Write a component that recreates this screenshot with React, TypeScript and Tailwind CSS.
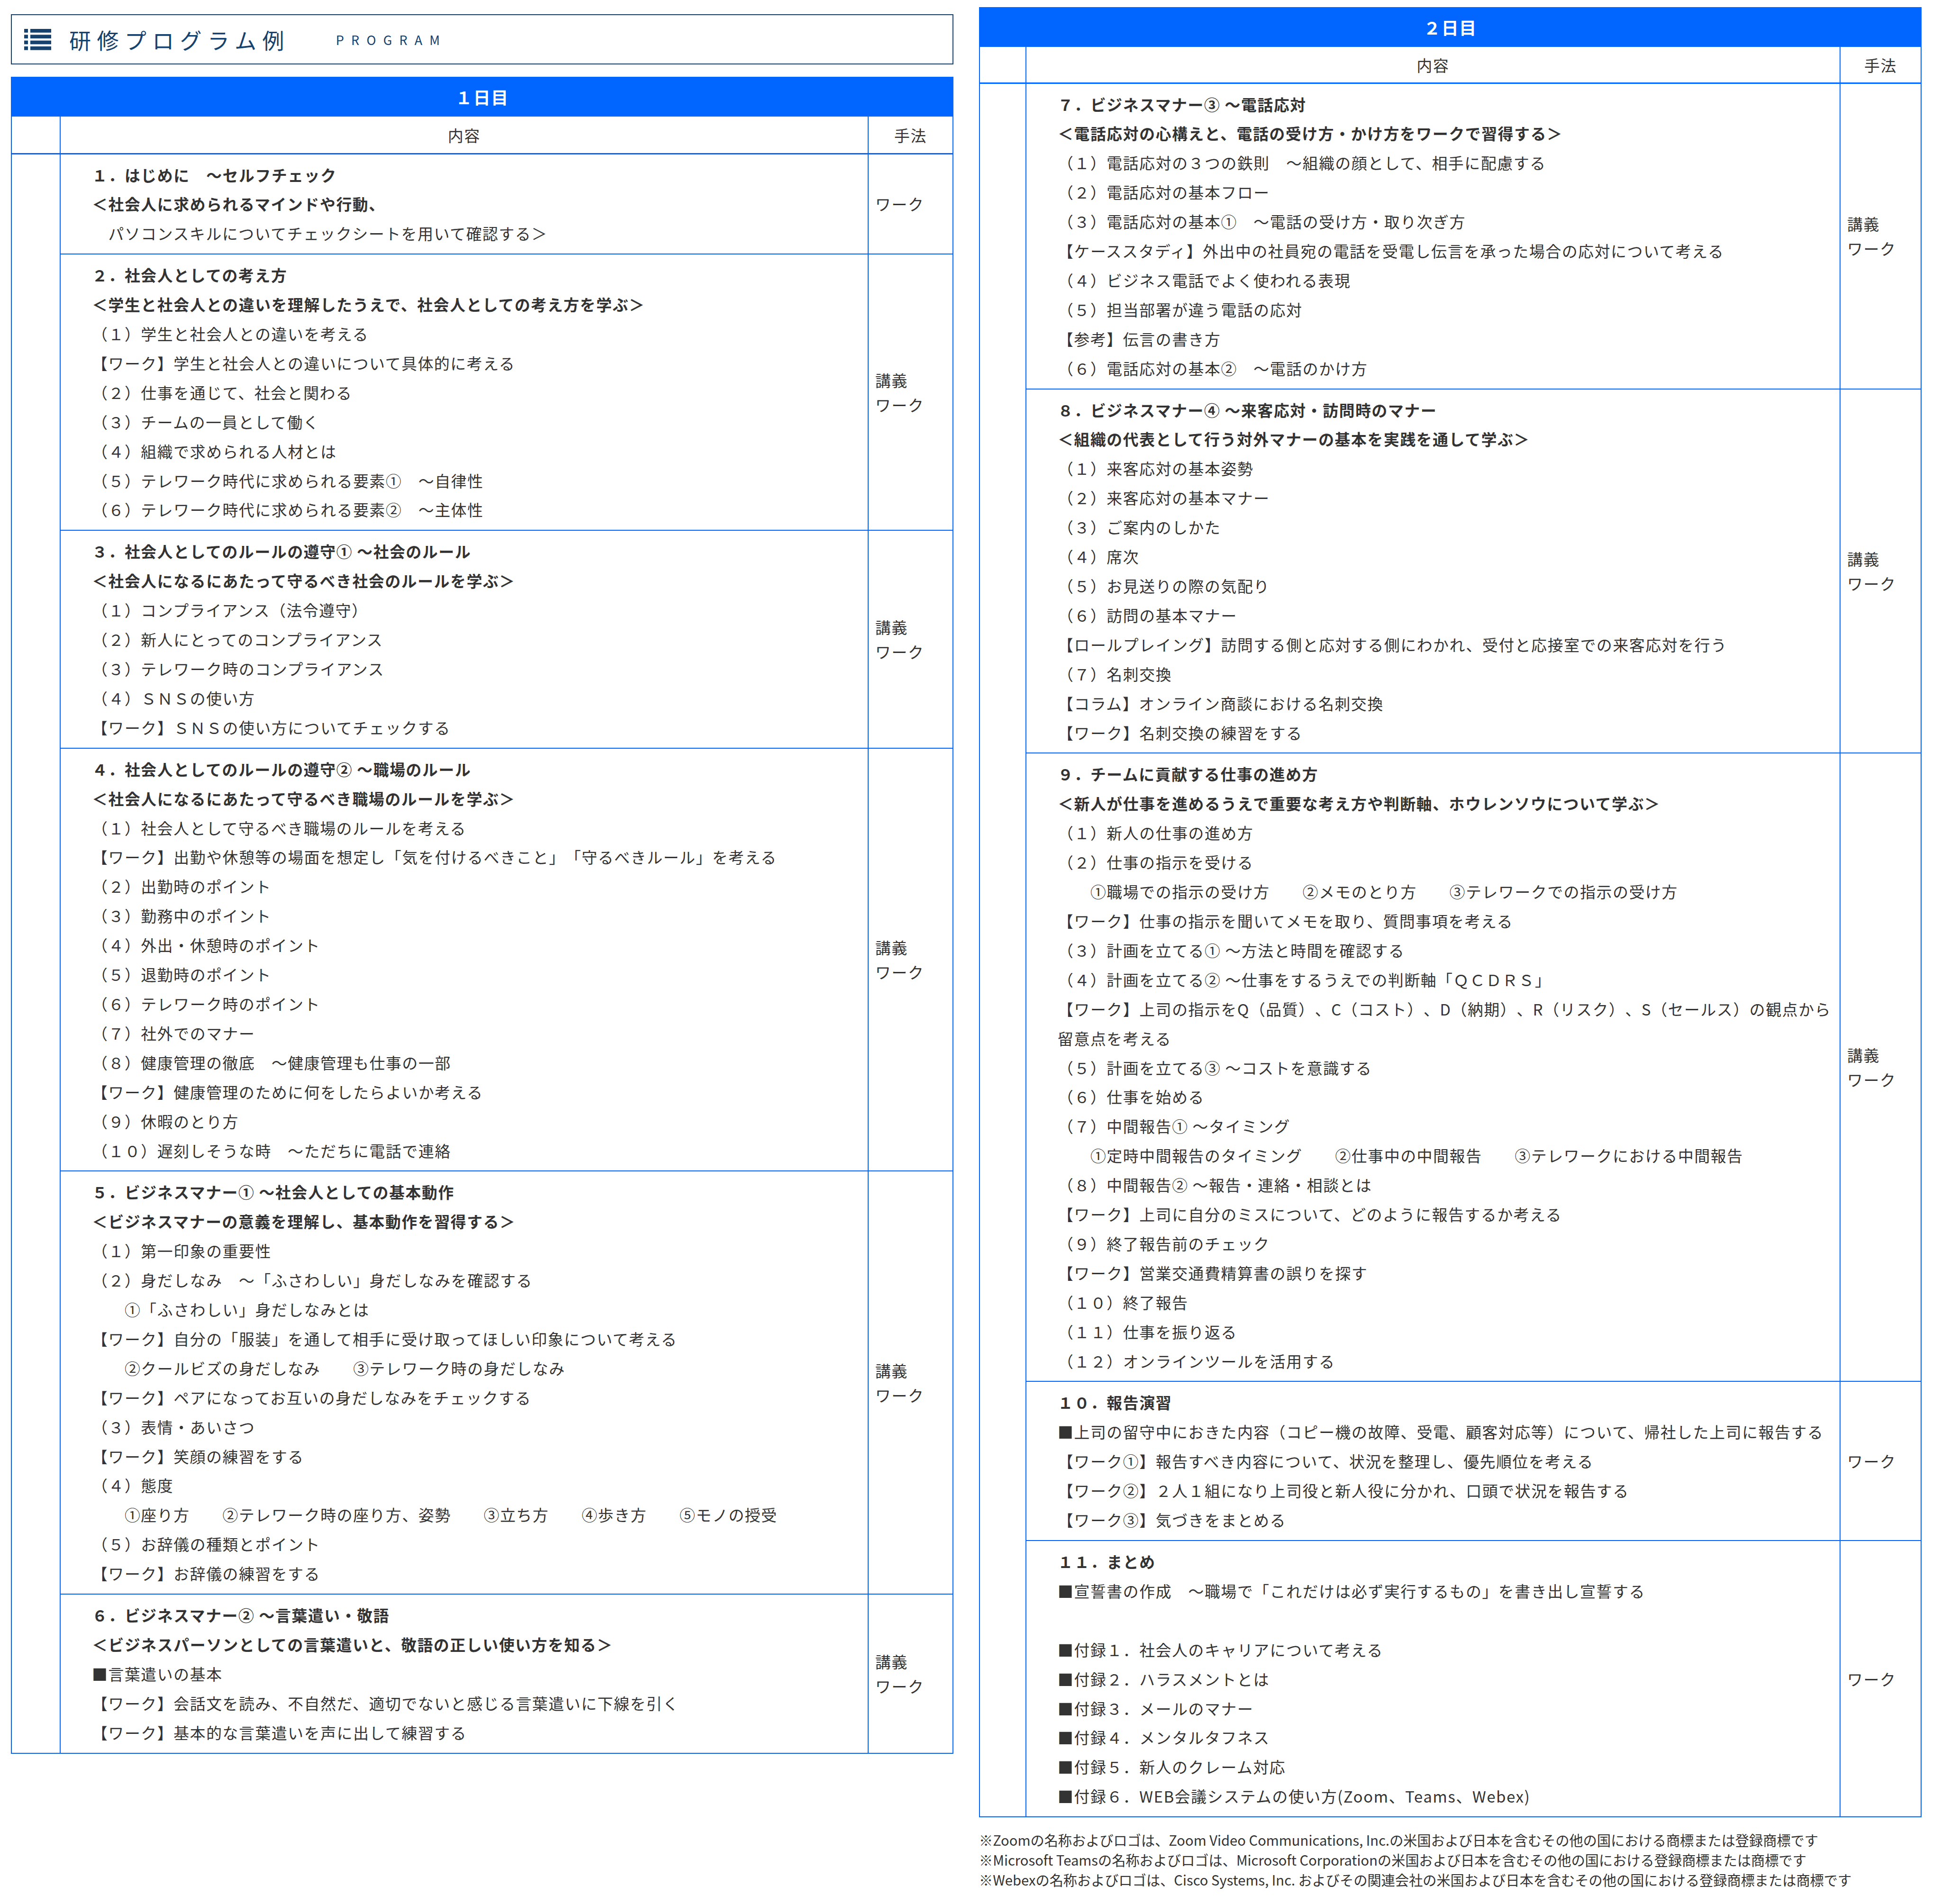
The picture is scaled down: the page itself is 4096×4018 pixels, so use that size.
const day1 = [
  {
    bold: 2,
    method: ["ワーク"],
    lines: [
      "１．はじめに　～セルフチェック",
      "＜社会人に求められるマインドや行動、",
      "　パソコンスキルについてチェックシートを用いて確認する＞",
    ],
  },
  {
    bold: 2,
    method: ["講義", "ワーク"],
    lines: [
      "２．社会人としての考え方",
      "＜学生と社会人との違いを理解したうえで、社会人としての考え方を学ぶ＞",
      "（１）学生と社会人との違いを考える",
      "【ワーク】学生と社会人との違いについて具体的に考える",
      "（２）仕事を通じて、社会と関わる",
      "（３）チームの一員として働く",
      "（４）組織で求められる人材とは",
      "（５）テレワーク時代に求められる要素①　～自律性",
      "（６）テレワーク時代に求められる要素②　～主体性",
    ],
  },
  {
    bold: 2,
    method: ["講義", "ワーク"],
    lines: [
      "３．社会人としてのルールの遵守① ～社会のルール",
      "＜社会人になるにあたって守るべき社会のルールを学ぶ＞",
      "（１）コンプライアンス（法令遵守）",
      "（２）新人にとってのコンプライアンス",
      "（３）テレワーク時のコンプライアンス",
      "（４）ＳＮＳの使い方",
      "【ワーク】ＳＮＳの使い方についてチェックする",
    ],
  },
  {
    bold: 2,
    method: ["講義", "ワーク"],
    lines: [
      "４．社会人としてのルールの遵守② ～職場のルール",
      "＜社会人になるにあたって守るべき職場のルールを学ぶ＞",
      "（１）社会人として守るべき職場のルールを考える",
      "【ワーク】出勤や休憩等の場面を想定し「気を付けるべきこと」「守るべきルール」を考える",
      "（２）出勤時のポイント",
      "（３）勤務中のポイント",
      "（４）外出・休憩時のポイント",
      "（５）退勤時のポイント",
      "（６）テレワーク時のポイント",
      "（７）社外でのマナー",
      "（８）健康管理の徹底　～健康管理も仕事の一部",
      "【ワーク】健康管理のために何をしたらよいか考える",
      "（９）休暇のとり方",
      "（１０）遅刻しそうな時　～ただちに電話で連絡",
    ],
  },
  {
    bold: 2,
    method: ["講義", "ワーク"],
    lines: [
      "５．ビジネスマナー① ～社会人としての基本動作",
      "＜ビジネスマナーの意義を理解し、基本動作を習得する＞",
      "（１）第一印象の重要性",
      "（２）身だしなみ　～「ふさわしい」身だしなみを確認する",
      "　　①「ふさわしい」身だしなみとは",
      "【ワーク】自分の「服装」を通して相手に受け取ってほしい印象について考える",
      "　　②クールビズの身だしなみ　　③テレワーク時の身だしなみ",
      "【ワーク】ペアになってお互いの身だしなみをチェックする",
      "（３）表情・あいさつ",
      "【ワーク】笑顔の練習をする",
      "（４）態度",
      "　　①座り方　　②テレワーク時の座り方、姿勢　　③立ち方　　④歩き方　　⑤モノの授受",
      "（５）お辞儀の種類とポイント",
      "【ワーク】お辞儀の練習をする",
    ],
  },
  {
    bold: 2,
    method: ["講義", "ワーク"],
    lines: [
      "６．ビジネスマナー② ～言葉遣い・敬語",
      "＜ビジネスパーソンとしての言葉遣いと、敬語の正しい使い方を知る＞",
      "■言葉遣いの基本",
      "【ワーク】会話文を読み、不自然だ、適切でないと感じる言葉遣いに下線を引く",
      "【ワーク】基本的な言葉遣いを声に出して練習する",
    ],
  },
];

const day2 = [
  {
    bold: 2,
    method: ["講義", "ワーク"],
    lines: [
      "７．ビジネスマナー③ ～電話応対",
      "＜電話応対の心構えと、電話の受け方・かけ方をワークで習得する＞",
      "（１）電話応対の３つの鉄則　～組織の顔として、相手に配慮する",
      "（２）電話応対の基本フロー",
      "（３）電話応対の基本①　～電話の受け方・取り次ぎ方",
      "【ケーススタディ】外出中の社員宛の電話を受電し伝言を承った場合の応対について考える",
      "（４）ビジネス電話でよく使われる表現",
      "（５）担当部署が違う電話の応対",
      "【参考】伝言の書き方",
      "（６）電話応対の基本②　～電話のかけ方",
    ],
  },
  {
    bold: 2,
    method: ["講義", "ワーク"],
    lines: [
      "８．ビジネスマナー④ ～来客応対・訪問時のマナー",
      "＜組織の代表として行う対外マナーの基本を実践を通して学ぶ＞",
      "（１）来客応対の基本姿勢",
      "（２）来客応対の基本マナー",
      "（３）ご案内のしかた",
      "（４）席次",
      "（５）お見送りの際の気配り",
      "（６）訪問の基本マナー",
      "【ロールプレイング】訪問する側と応対する側にわかれ、受付と応接室での来客応対を行う",
      "（７）名刺交換",
      "【コラム】オンライン商談における名刺交換",
      "【ワーク】名刺交換の練習をする",
    ],
  },
  {
    bold: 2,
    method: ["講義", "ワーク"],
    lines: [
      "９．チームに貢献する仕事の進め方",
      "＜新人が仕事を進めるうえで重要な考え方や判断軸、ホウレンソウについて学ぶ＞",
      "（１）新人の仕事の進め方",
      "（２）仕事の指示を受ける",
      "　　①職場での指示の受け方　　②メモのとり方　　③テレワークでの指示の受け方",
      "【ワーク】仕事の指示を聞いてメモを取り、質問事項を考える",
      "（３）計画を立てる① ～方法と時間を確認する",
      "（４）計画を立てる② ～仕事をするうえでの判断軸「ＱＣＤＲＳ」",
      "【ワーク】上司の指示をQ（品質）、C（コスト）、D（納期）、R（リスク）、S（セールス）の観点から留意点を考える",
      "（５）計画を立てる③ ～コストを意識する",
      "（６）仕事を始める",
      "（７）中間報告① ～タイミング",
      "　　①定時中間報告のタイミング　　②仕事中の中間報告　　③テレワークにおける中間報告",
      "（８）中間報告② ～報告・連絡・相談とは",
      "【ワーク】上司に自分のミスについて、どのように報告するか考える",
      "（９）終了報告前のチェック",
      "【ワーク】営業交通費精算書の誤りを探す",
      "（１０）終了報告",
      "（１１）仕事を振り返る",
      "（１２）オンラインツールを活用する",
    ],
  },
  {
    bold: 1,
    method: ["ワーク"],
    lines: [
      "１０．報告演習",
      "■上司の留守中におきた内容（コピー機の故障、受電、顧客対応等）について、帰社した上司に報告する",
      "【ワーク①】報告すべき内容について、状況を整理し、優先順位を考える",
      "【ワーク②】２人１組になり上司役と新人役に分かれ、口頭で状況を報告する",
      "【ワーク③】気づきをまとめる",
    ],
  },
  {
    bold: 1,
    method: ["ワーク"],
    lines: [
      "１１．まとめ",
      "■宣誓書の作成　～職場で「これだけは必ず実行するもの」を書き出し宣誓する",
      "　",
      "■付録１．社会人のキャリアについて考える",
      "■付録２．ハラスメントとは",
      "■付録３．メールのマナー",
      "■付録４．メンタルタフネス",
      "■付録５．新人のクレーム対応",
      "■付録６．WEB会議システムの使い方(Zoom、Teams、Webex)",
    ],
  },
];

const notes = [
  "※Zoomの名称およびロゴは、Zoom Video Communications, Inc.の米国および日本を含むその他の国における商標または登録商標です",
  "※Microsoft Teamsの名称およびロゴは、Microsoft Corporationの米国および日本を含むその他の国における登録商標または商標です",
  "※Webexの名称およびロゴは、Cisco Systems, Inc. およびその関連会社の米国および日本を含むその他の国における登録商標または商標です",
];

type Section = { bold: number; method: string[]; lines: string[] };

type DayTableProps = {
  title: string;
  sections: Section[];
  blankCol: string;
  methodCol: string;
  headRow: string;
};

function ListIcon() {
  return (
    <svg viewBox="0 0 57 45" aria-hidden className="h-[45px] w-[57px] shrink-0 fill-[#17426e]">
      {[0, 12.3, 24.6, 36.9].map((y) => (
        <g key={y}>
          <rect x="0" y={y} width="8" height="7.8" />
          <rect x="13" y={y} width="44" height="7.8" />
        </g>
      ))}
    </svg>
  );
}

function DayTable({ title, sections, blankCol, methodCol, headRow }: DayTableProps) {
  return (
    <table className="w-full table-fixed border-collapse border-2 border-[#0066ff] text-[32.8px] tracking-[1.65px] text-[#333]">
      <colgroup>
        <col className={blankCol} />
        <col />
        <col className={methodCol} />
      </colgroup>
      <thead>
        <tr>
          <th colSpan={3} className="h-[83px] bg-[#0066ff] pb-[3px] text-center text-[36px] font-bold text-white">
            {title}
          </th>
        </tr>
        <tr className={headRow}>
          <th className="border-r-2 border-b-[3px] border-[#0066ff]" />
          <th className="border-r-2 border-b-[3px] border-[#0066ff] text-center font-normal">内容</th>
          <th className="border-b-[3px] border-[#0066ff] text-center font-normal">手法</th>
        </tr>
      </thead>
      <tbody>
        {sections.map((section, index) => (
          <tr key={section.lines[0]}>
            {index === 0 ? <td rowSpan={sections.length} className="border-r-2 border-[#0066ff]" /> : null}
            <td className="border-r-2 border-b-2 border-[#0066ff] pt-[12px] pr-[14px] pb-[12px] pl-[66px] leading-[61.9px]">
              {section.lines.map((line, lineIndex) => (
                <div key={lineIndex} className={lineIndex < section.bold ? "font-bold" : "font-normal"}>
                  {line}
                </div>
              ))}
            </td>
            <td className="border-b-2 border-[#0066ff] pl-[14px] align-middle leading-[52px]">
              {section.method.map((item) => (
                <div key={item}>{item}</div>
              ))}
            </td>
          </tr>
        ))}
      </tbody>
    </table>
  );
}

export default function App() {
  return (
    <div className="flex min-h-[4018px] w-[4096px] items-start gap-[54px] bg-white pt-[15px] pr-[41px] pl-[23px] font-['Noto_Sans_CJK_JP','Noto_Sans',sans-serif] whitespace-pre-wrap [text-autospace:no-autospace] [text-spacing-trim:space-all]">
      <div className="flex w-[1989px] flex-col gap-[26px] pt-[15px]">
        <header className="flex h-[106px] items-center border-2 border-[#17426e] pl-[26px] text-[#17426e]">
          <ListIcon />
          <h1 className="ml-[38px] text-[46px] leading-none font-normal tracking-[12.4px]">研修プログラム例</h1>
          <span className="ml-[97px] text-[27px] leading-none tracking-[15.2px]">PROGRAM</span>
        </header>
        <DayTable title="１日目" sections={day1} blankCol="w-[103px]" methodCol="w-[179px]" headRow="h-[78px]" />
      </div>
      <div className="flex w-[1989px] flex-col">
        <DayTable title="２日目" sections={day2} blankCol="w-[98px]" methodCol="w-[171px]" headRow="h-[76px]" />
        <div className="mt-[27px] text-[29.2px] leading-[41.8px] text-[#333]">
          {notes.map((note) => (
            <p key={note}>{note}</p>
          ))}
        </div>
      </div>
    </div>
  );
}
